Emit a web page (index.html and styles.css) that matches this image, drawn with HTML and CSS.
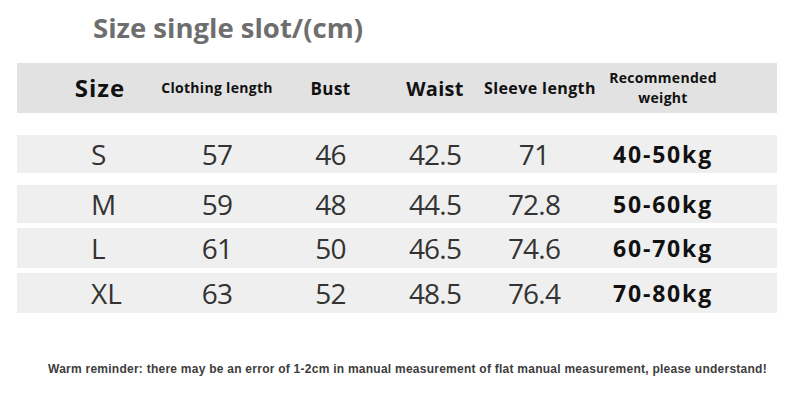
FILE: index.html
```html
<!DOCTYPE html>
<html lang="en">
<head>
    <meta charset="UTF-8">
    <meta name="viewport" content="width=device-width, initial-scale=1.0">
    <title>Size single slot</title>
    <link rel="stylesheet" href="styles.css">
</head>
<body>
    <div class="sheet">
        <h1 class="title">Size single slot/(cm)</h1>

        <div class="head">
            <div class="cell size-head">Size</div>
            <div class="cell small-head">Clothing length</div>
            <div class="cell bust-head">Bust</div>
            <div class="cell waist-head">Waist</div>
            <div class="cell sleeve-head">Sleeve length</div>
            <div class="cell small-head">Recommended<br>weight</div>
        </div>

        <div class="rows">
            <div class="row">
                <div class="cell size">S</div>
                <div class="cell">57</div>
                <div class="cell">46</div>
                <div class="cell">42.5</div>
                <div class="cell">71</div>
                <div class="cell weight">40-50kg</div>
            </div>
            <div class="row">
                <div class="cell size">M</div>
                <div class="cell">59</div>
                <div class="cell">48</div>
                <div class="cell">44.5</div>
                <div class="cell">72.8</div>
                <div class="cell weight">50-60kg</div>
            </div>
            <div class="row">
                <div class="cell size">L</div>
                <div class="cell">61</div>
                <div class="cell">50</div>
                <div class="cell">46.5</div>
                <div class="cell">74.6</div>
                <div class="cell weight">60-70kg</div>
            </div>
            <div class="row">
                <div class="cell size">XL</div>
                <div class="cell">63</div>
                <div class="cell">52</div>
                <div class="cell">48.5</div>
                <div class="cell">76.4</div>
                <div class="cell weight">70-80kg</div>
            </div>
        </div>

        <p class="note">Warm reminder: there may be an error of 1-2cm in manual measurement of flat manual measurement, please understand!</p>
    </div>
</body>
</html>
```

FILE: styles.css
```css
:root {
    --head-bg: #e2e2e2;
    --row-bg: #efefef;
    --cols: 118px 116px 111px 98px 100px 158px;
}

body {
    margin: 0;
    background: #ffffff;
    font-family: "Open Sans", "Noto Sans", "Liberation Sans", sans-serif;
    color: #333333;
}

.sheet {
    width: 790px;
    height: 405px;
    padding: 10px 13px 0 17px;
    box-sizing: border-box;
}

.title {
    margin: 0 0 17px 76px;
    font-size: 27.5px;
    line-height: 36px;
    font-weight: 700;
    color: #6e6e6e;
}

.head,
.row {
    display: grid;
    grid-template-columns: var(--cols);
    padding-left: 24px;
    align-items: center;
}

.head {
    height: 50px;
    background: var(--head-bg);
    color: #111111;
    font-weight: 700;
}

.cell {
    text-align: center;
    white-space: nowrap;
}

.size-head {
    font-size: 24px;
    letter-spacing: 1px;
    margin-top: -2px;
}

.small-head {
    font-size: 14px;
    line-height: 20px;
    letter-spacing: 0.3px;
}

.bust-head {
    font-size: 17px;
    letter-spacing: 0.4px;
}

.waist-head {
    font-size: 20px;
    letter-spacing: 0.3px;
}

.sleeve-head {
    font-size: 16px;
    letter-spacing: 0.4px;
}

.rows {
    display: flex;
    flex-direction: column;
    margin-top: 22px;
}

.row {
    height: 38px;
    background: var(--row-bg);
    font-size: 28px;
    letter-spacing: -0.8px;
}

.row + .row {
    margin-top: 5px;
}

.row:nth-child(2) {
    margin-top: 12px;
}

.row:nth-child(n+3) {
    height: 40px;
}

.size {
    text-align: left;
    padding-left: 50px;
    letter-spacing: 0;
}

.weight {
    font-size: 23px;
    font-weight: 700;
    letter-spacing: 1.8px;
    color: #111111;
}

.note {
    margin: 47px 0 0 31px;
    font-family: "Liberation Sans", sans-serif;
    font-size: 12px;
    line-height: 18px;
    font-weight: 700;
    letter-spacing: 0.25px;
    color: #3d3d3d;
}
```
